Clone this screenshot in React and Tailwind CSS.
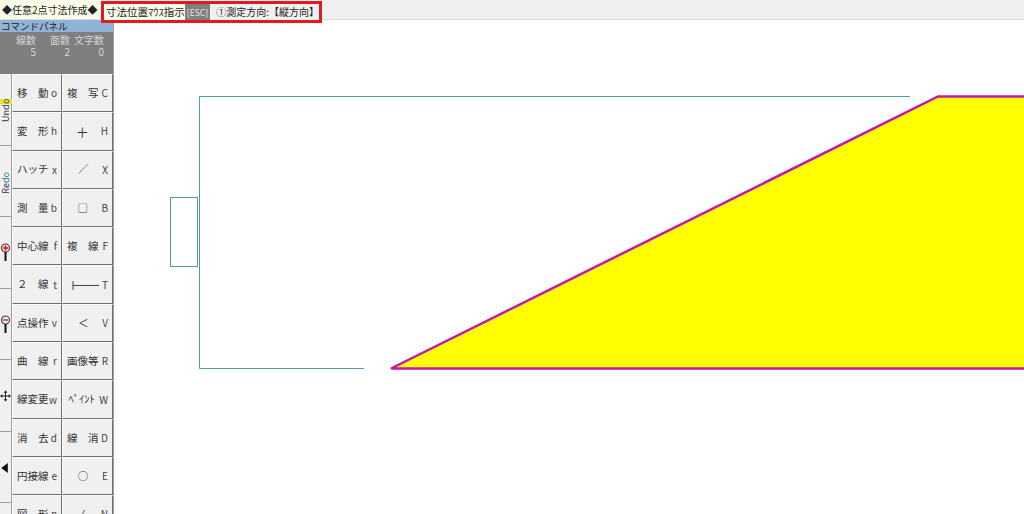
const tabs = [
  { label: "Undo" },
  { label: "Redo" },
  { icon: "plus" },
  { icon: "minus" },
  { icon: "move" },
  { icon: "tri" },
  { icon: null },
];

const buttons = [
  ["移　動", "o", "複　写", "C"],
  ["変　形", "h", "＋", "H"],
  ["ハッチ", "x", "／", "X"],
  ["測　量", "b", "□", "B"],
  ["中心線", "f", "複　線", "F"],
  ["２　線", "t", "line", "T"],
  ["点操作", "v", "＜", "V"],
  ["曲　線", "r", "画像等", "R"],
  ["線変更", "w", "ﾍﾟｲﾝﾄ", "W"],
  ["消　去", "d", "線　消", "D"],
  ["円接線", "e", "○", "E"],
  ["図　形", "n", "⁄", "N"],
];

function Lens({ kind }) {
  return (
    <svg width="11" height="22" viewBox="0 0 11 22">
      <circle cx="5.500" cy="6" r="4" fill="#eee" stroke="#7a2a2a" strokeWidth="1.2" />
      {kind === "plus" ? <path d="M3 6h5M5.500 3.500v5" stroke="#d01818" strokeWidth="1.6" /> : <path d="M3 6h5" stroke="#444" strokeWidth="1.2" />}
      <path d="M5.500 10v9" stroke="#111" strokeWidth="2" />
    </svg>
  );
}

function Tab({ tab }) {
  return (
    <div className="h-[71.5px] shrink-0 border-b border-[#a0a0a0] flex items-center justify-center bg-[#f0f0f0]">
      {tab.label === "Undo" && (
        <span className="[writing-mode:vertical-rl] rotate-180 text-[9px] leading-none text-[#333] translate-y-[1px]">
          Und<span className="bg-[#e6e23a] text-[#444]">o</span>
        </span>
      )}
      {tab.label === "Redo" && (
        <span className="[writing-mode:vertical-rl] rotate-180 text-[9px] leading-none text-[#333] translate-y-[2px]">
          Re<span className="text-[#16807a]">do</span>
        </span>
      )}
      {(tab.icon === "plus" || tab.icon === "minus") && (
        <span className={tab.icon === "plus" ? "translate-y-[1px]" : "translate-y-[1px]"}>
          <Lens kind={tab.icon} />
        </span>
      )}
      {tab.icon === "move" && (
        <svg width="12" height="12" viewBox="0 0 12 12" className="translate-y-[1px]">
          <path d="M6 0l2 2.500H4zM6 12l2-2.500H4zM0 6l2.500-2v4zM12 6l-2.500-2v4z" fill="#111" />
          <path d="M6 2v8M2 6h8" stroke="#111" strokeWidth="1" />
        </svg>
      )}
      {tab.icon === "tri" && (
        <svg width="7" height="10" viewBox="0 0 8 12" className="translate-x-[-1px] translate-y-[1px]">
          <path d="M0 6L8 0v12z" fill="#111" />
        </svg>
      )}
    </div>
  );
}

function Cmd({ text, k, wide }) {
  const big = text === "＋";
  return (
    <div className="h-[38.3px] border border-t-[#fafafa] border-l-[#fafafa] border-r-[#707070] border-b-[#707070] bg-[#f0f0f0] flex items-center justify-between pl-[4px] pr-[4px] text-[10.5px] leading-none text-[#333]">
      <span className={(wide ? "flex-1 text-center pr-[3px] " : "") + (big ? "text-[13px]" : "")}>
        {text === "line" ? (
          <svg width="27" height="9" viewBox="0 0 27 9" className="inline-block ml-[4px]">
            <path d="M1 0v9M1 4.500h26" stroke="#444" strokeWidth="1" />
          </svg>
        ) : (
          text
        )}
      </span>
      <span className="text-[10px] text-[#444]">{k}</span>
    </div>
  );
}

export default function App() {
  return (
    <div className="w-[1024px] h-[514px] overflow-hidden bg-white flex flex-col relative font-['Noto_Sans_CJK_JP','Noto_Sans',sans-serif]">
      <div className="h-[20px] shrink-0 bg-[#f0f0f0] border-b border-[#dcdcdc] flex items-center text-[10px] leading-none text-[#222]">
        <div className="w-[101px] h-full bg-[#fbfbe9] flex items-center pl-[2px] whitespace-nowrap">◆任意2点寸法作成◆</div>
        <div className="absolute left-[101px] top-[1px] w-[221px] h-[22px] border-[3px] border-[#e01a22] flex items-center text-[10px] whitespace-nowrap z-10">
          <span className="bg-[#fbfbe9] h-full flex items-center pl-[2px] w-[82px] text-[10.5px]">寸法位置ﾏｳｽ指示</span>
          <span className="bg-[#7f7f7f] text-[#e4e4e4] h-full flex items-center justify-center w-[26px] text-[8.5px]">[ESC]</span>
          <span className="bg-[#f0f0f0] h-full flex items-center pl-[6px] flex-1">①測定方向:【縦方向】</span>
        </div>
      </div>
      <div className="flex-1 flex min-h-0">
        <div className="w-[114px] shrink-0 flex flex-col border-r border-[#a0a0a0] bg-[#f0f0f0]">
          <div className="h-[12px] shrink-0 bg-[#8fb3d6] text-[9.5px] leading-[12px] pl-[1px] text-[#222]">コマンドパネル</div>
          <div className="h-[42px] shrink-0 bg-[#7f7f7f] text-[#d4d4d4] text-[10px] leading-[12px] pt-[2px] grid grid-cols-[36px_34px_34px] content-start text-right whitespace-nowrap">
            <span>線数</span>
            <span>面数</span>
            <span>文字数</span>
            <span>5</span>
            <span>2</span>
            <span>0</span>
          </div>
          <div className="flex flex-1 min-h-0 overflow-hidden">
            <div className="w-[12px] shrink-0 flex flex-col border-r border-[#a0a0a0]">
              {tabs.map((t, i) => <Tab key={i} tab={t} />)}
            </div>
            <div className="w-[101px] grid grid-cols-[50px_51px] content-start">
              {buttons.map((b, i) => (
                <div key={i} className="contents">
                  <Cmd text={b[0]} k={b[1]} />
                  <Cmd text={b[2]} k={b[3]} wide={["＋", "／", "□", "＜", "○", "⁄", "ﾍﾟｲﾝﾄ", "line"].includes(b[2])} />
                </div>
              ))}
            </div>
          </div>
        </div>
        <div className="flex-1 min-w-0">
          <svg width="910" height="494" viewBox="114 20 910 494" className="block">
            <path d="M910 96.500H199.500V368.500H364" fill="none" stroke="#4f9ca3" strokeWidth="1" />
            <rect x="170.500" y="197.500" width="27" height="69" fill="none" stroke="#4f9ca3" strokeWidth="1" />
            <path d="M391 368.500L938 96.500H1030V368.500Z" fill="#ffff00" stroke="#c418ac" strokeWidth="2.500" />
          </svg>
        </div>
      </div>
    </div>
  );
}
